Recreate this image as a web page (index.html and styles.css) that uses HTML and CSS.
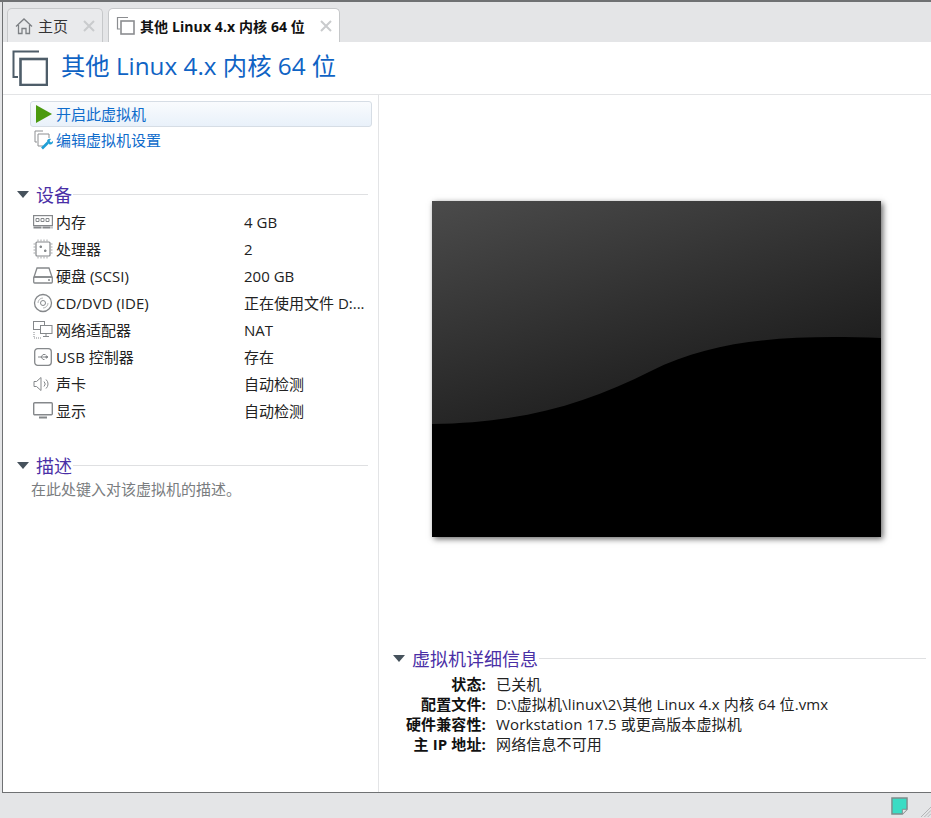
FILE: index.html
```html
<!DOCTYPE html>
<html lang="zh-CN">
<head>
    <meta charset="UTF-8">
    <title>其他 Linux 4.x 内核 64 位</title>
    <link rel="stylesheet" href="styles.css">
</head>
<body>
    <div class="window">
        <div class="tabs">
            <div class="tab">
                <svg class="tab-icon" width="18" height="18" viewBox="0 0 18 18" fill="none" stroke="#7d8084" stroke-width="1.3"><path d="M1 9.500 9 2l8 7.500M3.500 8v8.500H7v-5h4v5h3.500V8"/></svg>
                <span class="tab-label">主页</span>
                <svg class="tab-close" width="12" height="12" viewBox="0 0 12 12" stroke="#c9cbcd" stroke-width="2"><path d="M1 1l10 10M11 1 1 11"/></svg>
            </div>
            <div class="tab active">
                <svg class="tab-icon" width="19" height="19" viewBox="0 0 19 19" fill="none" stroke="#8b8d90"><path d="M12 1.500H1.500V13H4" stroke-width="1.200"/><rect x="5" y="5" width="13" height="13" stroke-width="1.600"/></svg>
                <span class="tab-label">其他 Linux 4.x 内核 64 位</span>
                <svg class="tab-close" width="12" height="12" viewBox="0 0 12 12" stroke="#c9cbcd" stroke-width="2"><path d="M1 1l10 10M11 1 1 11"/></svg>
            </div>
        </div>

        <div class="content">
            <div class="title-bar">
                <svg width="36" height="36" viewBox="0 0 36 36" fill="none" stroke="#4e5d69"><path d="M27 1.500H1.500V27H6" stroke-width="2"/><rect x="8.500" y="9" width="26.500" height="26" stroke-width="2.600"/></svg>
                <h1>其他 Linux 4.x 内核 64 位</h1>
            </div>

            <div class="panes">
                <div class="left-pane">
                    <div class="action action-main">
                        <svg width="16" height="18" viewBox="0 0 16 18"><path d="M0 0l16 9L0 18z" fill="#4b9a0e"/></svg>
                        <span>开启此虚拟机</span>
                    </div>
                    <div class="action">
                        <svg width="20" height="20" viewBox="0 0 20 20" fill="none" stroke="#8d8f92"><path d="M9 1H1v11h2"/><path d="M4 4h11v4M4 4v12h5"/><path d="M8 18.500l6-6" stroke="#1f9fd6" stroke-width="2.600"/><path d="M13 11.500c0-2 2-3.500 4-2.500l-1.500 2 1.500 1.500 2-1.500c.6 2-1.500 4-3.500 3.500" fill="#1f9fd6" stroke="none"/></svg>
                        <span>编辑虚拟机设置</span>
                    </div>

                    <div class="section-head devices-head">
                        <span class="arrow"></span>
                        <span class="section-title">设备</span>
                        <span class="section-line"></span>
                    </div>
                    <div class="device-list">
                        <div class="device">
                            <svg width="20" height="14" viewBox="0 0 20 14" fill="none" stroke="#85888b" stroke-width="1.200"><rect x=".6" y=".6" width="18.800" height="10"/><path d="M3 3.500h3v3H3zM8 3.500h3v3H8zM13 3.500h3v3h-3z" stroke-width="1"/><path d="M.5 12.500h19" stroke-width="2" stroke-dasharray="8 1"/></svg>
                            <span class="device-name">内存</span><span>4 GB</span>
                        </div>
                        <div class="device">
                            <svg width="20" height="20" viewBox="0 0 20 20" fill="none" stroke="#85888b"><rect x="3" y="3" width="14" height="14" rx="1" stroke-width="1.200"/><path d="M.5 5h2M.5 8h2M.5 11h2M.5 14h2M17.500 5h2M17.500 8h2M17.500 11h2M17.500 14h2M5 .5v2M8 .5v2M11 .5v2M14 .5v2M5 17.500v2M8 17.500v2M11 17.500v2M14 17.500v2" stroke="#a5a7a9"/><path d="M7 7h1.500v1.500H7zM11.500 11h1.500v1.500h-1.500z" fill="#85888b"/></svg>
                            <span class="device-name">处理器</span><span>2</span>
                        </div>
                        <div class="device">
                            <svg width="20" height="17" viewBox="0 0 20 17" fill="none" stroke="#85888b" stroke-width="1.300"><path d="M4 1h12l3 9H1z"/><rect x=".7" y="10" width="18.600" height="6" rx="1"/><path d="M15 13h2"/></svg>
                            <span class="device-name">硬盘 (SCSI)</span><span>200 GB</span>
                        </div>
                        <div class="device">
                            <svg width="20" height="20" viewBox="0 0 20 20" fill="none" stroke="#85888b"><circle cx="10" cy="10" r="8.500" stroke-width="1.300"/><circle cx="10" cy="10" r="2.500"/><path d="M5 10a5 5 0 0 1 5-5M15 10a5 5 0 0 1-5 5" stroke="#b4b6b8"/></svg>
                            <span class="device-name">CD/DVD (IDE)</span><span>正在使用文件 D:...</span>
                        </div>
                        <div class="device">
                            <svg width="20" height="18" viewBox="0 0 20 18" fill="none" stroke="#85888b"><rect x=".5" y=".5" width="11" height="8"/><rect x="7.500" y="4.500" width="11.500" height="8" fill="#fff"/><path d="M13 12.500v3M10 15.500h6"/><path d="M1 11v6h8" stroke-dasharray="1 1"/></svg>
                            <span class="device-name">网络适配器</span><span>NAT</span>
                        </div>
                        <div class="device">
                            <svg width="20" height="18" viewBox="-1 0 20 18" fill="none" stroke="#85888b"><rect x=".7" y=".7" width="16.600" height="16.600" rx="3" stroke-width="1.300"/><path d="M4 9h10M7 9l2-2.500h2.500M7 9l2 2.500h1.500"/><path d="M14 9l-2-1.200v2.400z" fill="#85888b"/></svg>
                            <span class="device-name">USB 控制器</span><span>存在</span>
                        </div>
                        <div class="device">
                            <svg width="20" height="16" viewBox="0 0 20 16" fill="none" stroke="#85888b"><path d="M3.500 5.500H1v5h2.500L8 14.500v-13zM11 5.500a3.500 3.500 0 0 1 0 5M13 3.500a6 6 0 0 1 0 9"/></svg>
                            <span class="device-name">声卡</span><span>自动检测</span>
                        </div>
                        <div class="device">
                            <svg width="20" height="17" viewBox="0 0 20 17" fill="none" stroke="#85888b"><rect x=".7" y=".7" width="18.600" height="12" rx="1" stroke-width="1.400"/><path d="M6 15.500h8" stroke-width="2"/></svg>
                            <span class="device-name">显示</span><span>自动检测</span>
                        </div>
                    </div>

                    <div class="section-head desc-head">
                        <span class="arrow"></span>
                        <span class="section-title">描述</span>
                        <span class="section-line"></span>
                    </div>
                    <p class="desc">在此处键入对该虚拟机的描述。</p>
                </div>

                <div class="right-pane">
                    <div class="preview">
                        <svg width="449" height="336" viewBox="0 0 449 336">
                            <defs>
                                <linearGradient id="gloss" x1="0" y1="0" x2=".6" y2="1">
                                    <stop offset="0" stop-color="#4b4b4b"/>
                                    <stop offset=".9" stop-color="#1e1e1e"/>
                                </linearGradient>
                            </defs>
                            <rect width="449" height="336" fill="#000"/>
                            <path d="M0 0h449v137c-90-3-165 0-230 33-65 33-130 52-219 53z" fill="url(#gloss)"/>
                        </svg>
                    </div>
                    <div class="section-head details-head">
                        <span class="arrow"></span>
                        <span class="section-title">虚拟机详细信息</span>
                        <span class="section-line"></span>
                    </div>
                    <div class="details">
                        <span class="detail-key">状态:</span><span>已关机</span>
                        <span class="detail-key">配置文件:</span><span>D:\虚拟机\linux\2\其他 Linux 4.x 内核 64 位.vmx</span>
                        <span class="detail-key">硬件兼容性:</span><span>Workstation 17.5 或更高版本虚拟机</span>
                        <span class="detail-key">主 IP 地址:</span><span>网络信息不可用</span>
                    </div>
                </div>
            </div>
        </div>

        <div class="status-bar">
            <svg width="17" height="18" viewBox="0 0 18 19"><path d="M1 1h16v12l-5 5H1z" fill="#3adcc4" stroke="#7f8a8a" stroke-width="1.500"/><path d="M12 18v-5h5" fill="#e4e5e7" stroke="#7f8a8a"/></svg>
            <svg class="grip" width="10" height="10" viewBox="0 0 12 12" stroke="#a9abad"><path d="M12 0 0 12M12 4l-8 8M12 8l-4 4"/></svg>
        </div>
    </div>
</body>
</html>
```

FILE: styles.css
```css
* {
    box-sizing: border-box;
}
html, body {
    height: 100%;
}
body {
    margin: 0;
    overflow: hidden;
    background-color: #e4e5e7;
    font-family: "Open Sans", "Noto Sans CJK SC", sans-serif;
    font-size: 15px;
    color: #222;
}
.window {
    display: flex;
    flex-direction: column;
    height: 818px;
    padding-left: 2px;
    background-color: #e4e5e7;
    border-top: 2px solid #6f7173;
}
.tabs {
    display: flex;
    align-items: flex-end;
    gap: 5px;
    height: 40px;
    padding-left: 4px;
    border-left: 1px solid #6f7173;
}
.tab {
    display: flex;
    align-items: center;
    height: 34px;
    width: 96px;
    padding: 0 7px;
    background-color: #e9eaec;
    border: 1px solid #c6c8ca;
    border-bottom: none;
    border-radius: 5px 5px 0 0;
}
.tab.active {
    width: 232px;
    background-color: #fff;
}
.tab-icon {
    flex: none;
}
.tab-label {
    margin-left: 5px;
    white-space: nowrap;
    color: #333;
}
.tab.active .tab-label {
    font-size: 14px;
    font-weight: 700;
    letter-spacing: 0.1px;
    color: #111;
}
.tab-close {
    margin-left: auto;
    flex: none;
}
.content {
    display: flex;
    flex-direction: column;
    height: 751px;
    background-color: #fff;
    border-left: 1px solid #6f7173;
    border-bottom: 1px solid #6f7173;
}
.title-bar {
    display: flex;
    align-items: center;
    gap: 13px;
    height: 53px;
    padding-left: 9px;
    border-bottom: 1px solid #e3e4e6;
}
h1 {
    margin: 0 0 7px;
    font-size: 24.3px;
    font-weight: 400;
    color: #0f63c4;
}
.panes {
    display: flex;
    flex: 1;
}
.left-pane {
    width: 376px;
    padding: 6px 9px 0 27px;
    border-right: 1px solid #e3e4e6;
}
.action {
    display: flex;
    align-items: center;
    gap: 2px;
    height: 26px;
    padding-left: 4px;
    color: #0f6ccb;
}
.action span {
    margin-bottom: 2px;
}
.action-main {
    margin-right: -3px;
    padding-left: 5px;
    gap: 4px;
    background: linear-gradient(#f9fbfd, #e9f1fa);
    border: 1px solid #d6dde5;
    border-radius: 3px;
}
.section-head {
    display: flex;
    align-items: center;
}
.arrow {
    width: 0;
    height: 0;
    border-style: solid;
    border-width: 7px 6px 0;
    border-color: #46525c transparent transparent;
    margin-right: 7px;
}
.section-title {
    font-size: 18px;
    color: #4a2fa6;
    white-space: nowrap;
}
.section-line {
    flex: 1;
    height: 1px;
    margin-left: 1px;
    background-color: #dfe0e2;
}
.devices-head {
    margin: 28px 1px 0 -13px;
    height: 26px;
}
.device-list {
    margin-top: 1px;
}
.device {
    display: flex;
    align-items: center;
    height: 27px;
}
.device svg {
    flex: none;
    margin-left: 3px;
}
.device-name {
    width: 188px;
    margin-left: 3px;
    white-space: nowrap;
}
.desc-head {
    margin: 28px 1px 0 -13px;
    height: 26px;
}
.desc {
    margin: 0 0 0 1px;
    color: #7a7d80;
}
.right-pane {
    flex: 1;
    padding-top: 106px;
}
.preview {
    display: flex;
    margin-left: 53px;
    width: 449px;
    height: 336px;
    box-shadow: 2px 2px 6px rgba(0, 0, 0, 0.6);
}
.details-head {
    margin: 108px 5px 0 14px;
    height: 26px;
}
.details {
    display: grid;
    grid-template-columns: 107px 1fr;
    column-gap: 10px;
    grid-auto-rows: 20px;
    align-items: center;
    margin: 2px 0 0 0;
    letter-spacing: 0.13px;
}
.detail-key {
    font-weight: 700;
    text-align: right;
    white-space: nowrap;
    color: #111;
}
.status-bar {
    display: flex;
    align-items: center;
    justify-content: flex-end;
    flex: 1;
    gap: 13px;
}
.grip {
    align-self: flex-end;
    margin-bottom: 1px;
}
```
